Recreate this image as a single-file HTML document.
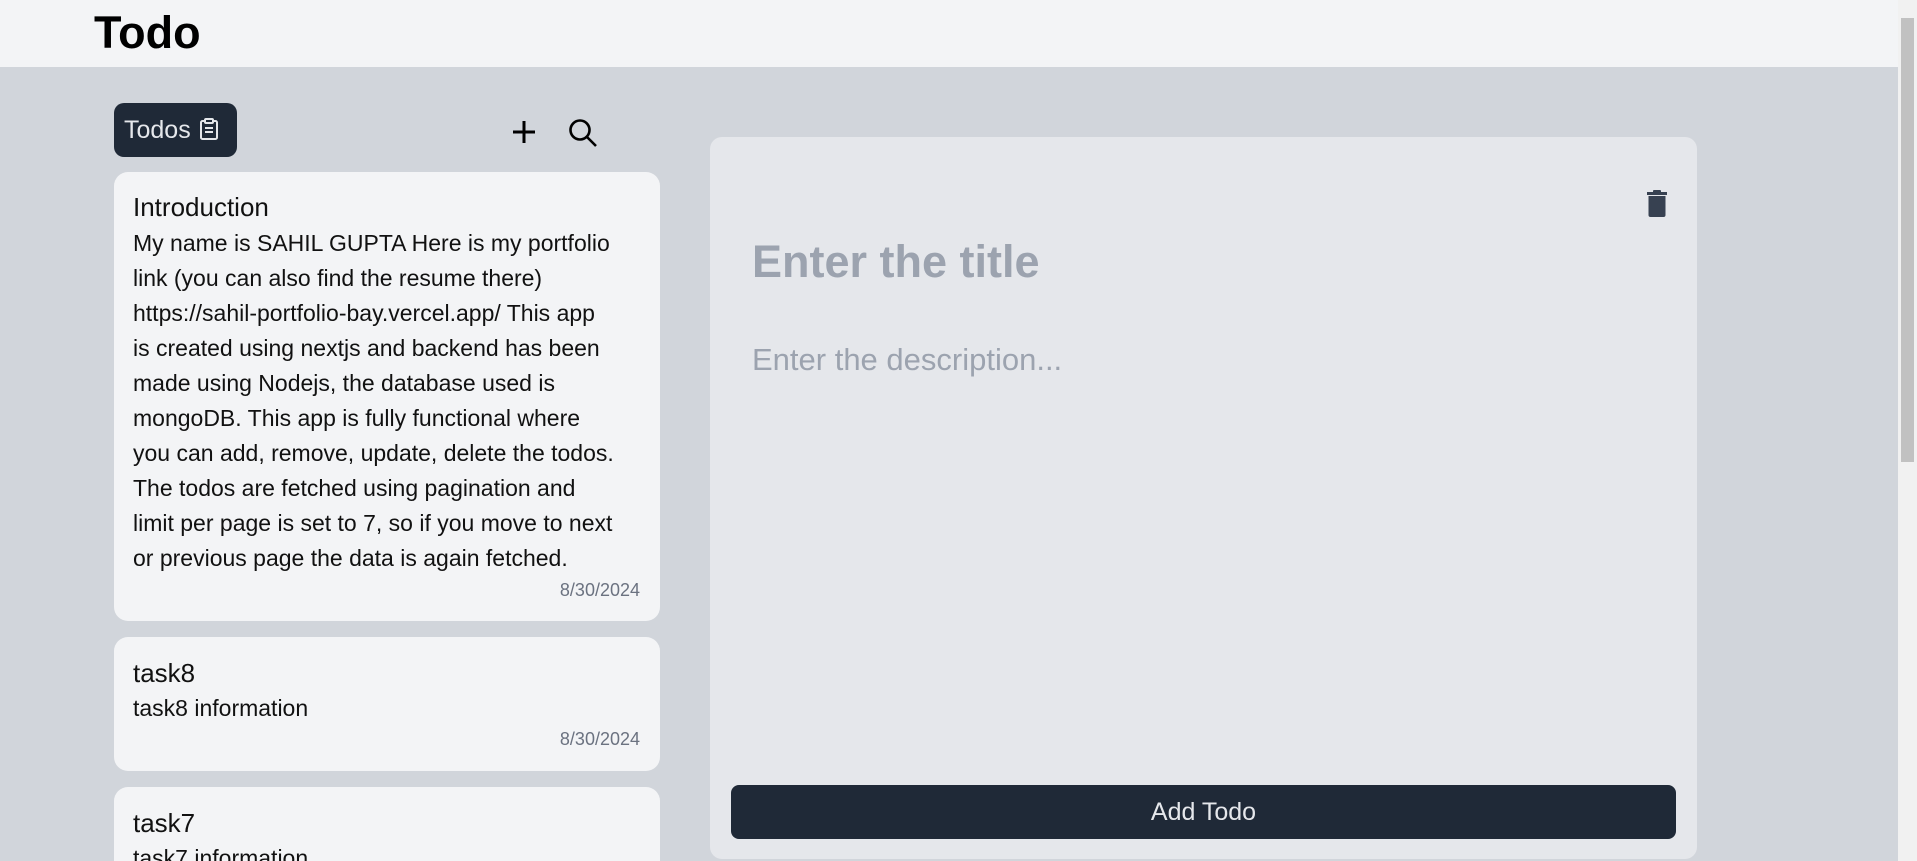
<!DOCTYPE html>
<html><head><meta charset="utf-8"><style>
*{margin:0;padding:0;box-sizing:border-box}
html{width:1917px;height:861px;overflow:hidden}
body{width:1917px;height:861px;overflow:hidden;background:#d1d5db;font-family:"Liberation Sans",sans-serif;position:relative}
.hdr{position:absolute;left:0;top:0;width:1898px;height:67px;background:#f3f4f6}
.hdr h1{position:absolute;left:94px;top:7px;font-size:45px;font-weight:bold;color:#000}
.sb{position:absolute;right:0;top:0;width:19px;height:861px;background:#f1f1f1}
.sb div{position:absolute;left:3px;top:18px;width:13px;height:444px;background:#c1c1c1}
.btn{position:absolute;left:114px;top:103px;width:123px;height:54px;background:#1f2937;border-radius:10px;color:#e5e7eb;font-size:25px;line-height:54px;padding-left:10px;white-space:nowrap}
.card{position:absolute;left:114px;width:546px;background:#f3f4f6;border-radius:14px;padding:0 19px;color:#111;overflow:hidden}
.card h3{font-weight:normal;font-size:26px;position:absolute;left:19px}
.card p{font-size:23px;line-height:35px;white-space:nowrap;position:absolute;left:19px}
.card .d{position:absolute;right:20px;font-size:18px;color:#6b7280}
.panel{position:absolute;left:710px;top:137px;width:987px;height:722px;background:#e5e7eb;border-radius:12px}
.add{position:absolute;left:731px;top:785px;width:945px;height:54px;background:#1f2937;border-radius:8px;color:#e5e7eb;font-size:25px;text-align:center;line-height:54px}
</style></head><body>
<div class="hdr"><h1>Todo</h1></div>
<div class="sb"><div></div></div>
<div class="btn">Todos <svg width="22" height="24" viewBox="0 0 22 24" style="vertical-align:-3px"><rect x="3" y="4" width="16" height="18" rx="1.5" fill="none" stroke="#e5e7eb" stroke-width="2"/><rect x="7" y="2" width="8" height="4" rx="1" fill="#1f2937" stroke="#e5e7eb" stroke-width="2"/><path d="M7 11h8M7 15h8" stroke="#e5e7eb" stroke-width="2"/></svg></div>
<svg style="position:absolute;left:510px;top:118px" width="28" height="28" viewBox="0 0 28 28"><path d="M14 3v22M3 14h22" stroke="#000" stroke-width="3"/></svg>
<svg style="position:absolute;left:567px;top:117px" width="32" height="32" viewBox="0 0 32 32"><circle cx="13" cy="13" r="9.5" fill="none" stroke="#000" stroke-width="2.6"/><path d="M20 20l9 9" stroke="#000" stroke-width="2.6"/></svg>
<div class="card" style="top:172px;height:449px">
<h3 style="top:20px">Introduction</h3>
<p style="top:54px">My name is SAHIL GUPTA Here is my portfolio<br>link (you can also find the resume there)<br>https://sahil-portfolio-bay.vercel.app/ This app<br>is created using nextjs and backend has been<br>made using Nodejs, the database used is<br>mongoDB. This app is fully functional where<br>you can add, remove, update, delete the todos.<br>The todos are fetched using pagination and<br>limit per page is set to 7, so if you move to next<br>or previous page the data is again fetched.</p>
<div class="d" style="top:408px">8/30/2024</div>
</div>
<div class="card" style="top:637px;height:134px">
<h3 style="top:21px">task8</h3>
<p style="top:54px">task8 information</p>
<div class="d" style="top:92px">8/30/2024</div>
</div>
<div class="card" style="top:787px;height:74px;border-radius:14px 14px 0 0">
<h3 style="top:21px">task7</h3>
<p style="top:54px">task7 information</p>
</div>
<div class="panel">
<svg style="position:absolute;left:935px;top:52px" width="24" height="30" viewBox="0 0 24 30"><rect x="2" y="3" width="20" height="3" fill="#374151"/><rect x="8" y="1" width="8" height="3" rx="1" fill="#374151"/><path d="M3.5 7h17v19a2 2 0 0 1-2 2h-13a2 2 0 0 1-2-2z" fill="#374151"/></svg>
<div style="position:absolute;left:42px;top:99px;font-size:45px;font-weight:bold;color:#9ca3af;white-space:nowrap">Enter the title</div>
<div style="position:absolute;left:42px;top:205px;font-size:31px;color:#9ca3af;white-space:nowrap">Enter the description...</div>
</div>
<div class="add">Add Todo</div>
</body></html>
